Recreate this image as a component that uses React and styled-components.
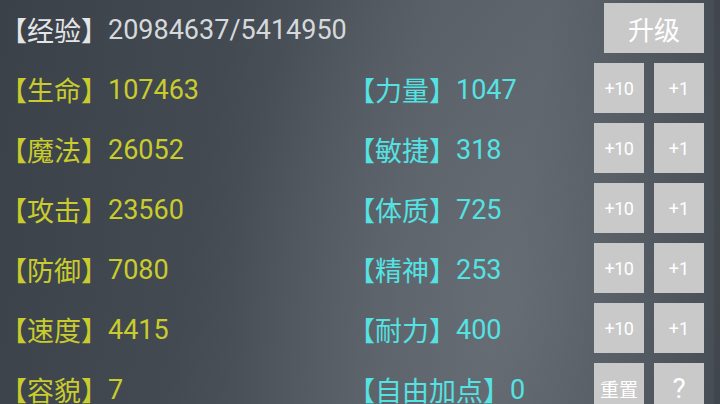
import React from "react";
import styled, { createGlobalStyle } from "styled-components";

const Global = createGlobalStyle`
  html, body { margin: 0; padding: 0; }
  body { width: 720px; height: 404px; overflow: hidden; background: #41484f; }
  #root { width: 720px; height: 404px; }
`;

const Page = styled.div`
  box-sizing: border-box;
  width: 720px;
  height: 404px;
  overflow: hidden;
  padding: 3px 16px 0 0;
  display: flex;
  flex-direction: column;
  gap: 10px;
  font-family: Roboto, "Noto Sans CJK SC", sans-serif;
  background:
    linear-gradient(to left, rgba(0, 0, 0, 0.09) 6px, transparent 6px),
    radial-gradient(ellipse 280px 440px at 510px 310px, rgba(112, 119, 126, 0.55), rgba(112, 119, 126, 0) 100%),
    linear-gradient(100deg, #3a4149 0%, #434a52 30%, #555c63 55%, #5a6168 70%, #4b5259 85%, #3f464d 100%);
`;

const Row = styled.div`
  display: flex;
  align-items: center;
  height: 50px;
  flex-shrink: 0;
`;

const StatCell = styled.div`
  width: ${(p) => (p.$wide ? "auto" : "348px")};
  flex: ${(p) => (p.$grow ? "1" : "none")};
  display: flex;
  align-items: center;
  padding-top: 3px;
  font-size: 27px;
  white-space: nowrap;
`;

const Label = styled.span`
  color: ${(p) => p.$color};
`;

const Value = styled.span`
  color: ${(p) => p.$color};
`;

const Buttons = styled.div`
  width: 110px;
  display: flex;
  justify-content: space-between;
  flex: none;
  margin-left: auto;
`;

const Btn = styled.div`
  box-sizing: border-box;
  width: ${(p) => p.$w || 50}px;
  height: ${(p) => p.$h || 50}px;
  background: #c9c9c9;
  color: #ffffff;
  display: flex;
  align-items: center;
  justify-content: center;
  font-size: ${(p) => p.$fs || 18}px;
  letter-spacing: ${(p) => p.$ls || 0}px;
`;

const UpgradeWrap = styled.div`
  margin-left: auto;
  display: flex;
  justify-content: flex-end;
`;

const Y = "#c9cc2c";
const C = "#55e2e3";

const rows = [
  [["生命", "107463"], ["力量", "1047"]],
  [["魔法", "26052"], ["敏捷", "318"]],
  [["攻击", "23560"], ["体质", "725"]],
  [["防御", "7080"], ["精神", "253"]],
  [["速度", "4415"], ["耐力", "400"]],
];

export default function App() {
  return (
    <>
      <Global />
      <Page>
        <Row>
          <StatCell $wide>
            <Label $color="#e4e5e6">【经验】</Label>
            <Value $color="#d6d9dc">20984637/5414950</Value>
          </StatCell>
          <UpgradeWrap>
            <Btn $w={100} $h={50} $fs={26}>升级</Btn>
          </UpgradeWrap>
        </Row>
        {rows.map(([l, r]) => (
          <Row key={l[0]}>
            <StatCell>
              <Label $color={Y}>【{l[0]}】</Label>
              <Value $color={Y}>{l[1]}</Value>
            </StatCell>
            <StatCell $grow>
              <Label $color={C}>【{r[0]}】</Label>
              <Value $color={C}>{r[1]}</Value>
            </StatCell>
            <Buttons>
              <Btn $ls={-0.5}>+10</Btn>
              <Btn>+1</Btn>
            </Buttons>
          </Row>
        ))}
        <Row>
          <StatCell>
            <Label $color={Y}>【容貌】</Label>
            <Value $color={Y}>7</Value>
          </StatCell>
          <StatCell $grow>
            <Label $color={C}>【自由加点】</Label>
            <Value $color={C}>0</Value>
          </StatCell>
          <Buttons>
            <Btn $fs={19}>重置</Btn>
            <Btn $fs={28}>?</Btn>
          </Buttons>
        </Row>
      </Page>
    </>
  );
}
